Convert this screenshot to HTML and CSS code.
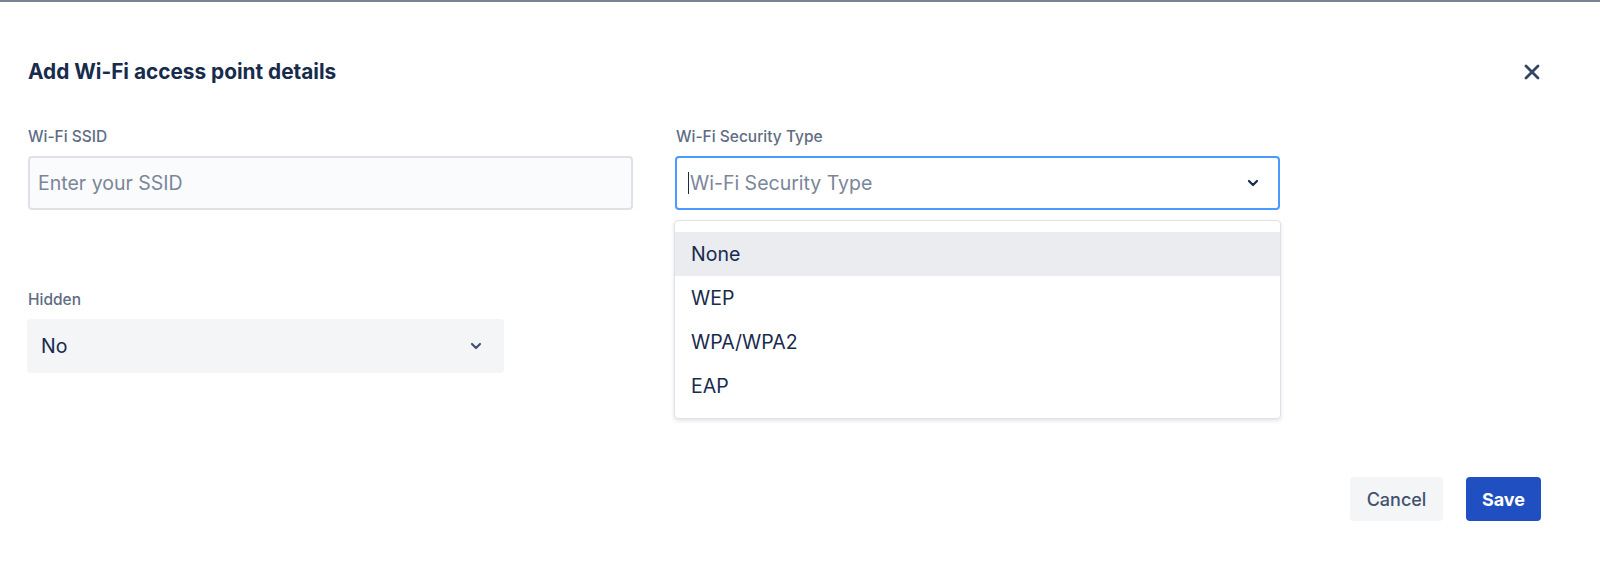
FILE: index.html
```html
<!DOCTYPE html>
<html>
  <head>
    <title>Add Wi-Fi access point</title>
    <meta charset="utf-8">
    <link rel="stylesheet" href="styles.css">
  </head>
  <body>
  <div class="topline"></div>
  <div class="modal">
    <div class="modal-header">
      <h1 class="modal-title">Add Wi-Fi access point details</h1>
      <span class="close-btn">
        <svg width="16" height="16" viewBox="0 0 16 16"><path d="M2 2 L14 14 M14 2 L2 14" stroke="#344563" stroke-width="2.8" stroke-linecap="round"/></svg>
      </span>
    </div>

    <div class="form-grid">
      <div class="field">
        <label class="field-label">Wi-Fi SSID</label>
        <div class="text-input"><span class="placeholder">Enter your SSID</span></div>
      </div>
      <div class="field field-security">
        <label class="field-label">Wi-Fi Security Type</label>
        <div class="select select-focused">
          <span class="placeholder"><span class="caret"></span>Wi-Fi Security Type</span>
          <svg class="chevron" width="12" height="8" viewBox="0 0 12 8"><path d="M2 2 L6 6 L10 2" fill="none" stroke="#172b4d" stroke-width="2.2" stroke-linecap="round" stroke-linejoin="round"/></svg>
        </div>
        <!-- open menu of the security select -->
        <div class="menu">
          <div class="menu-item active">None</div>
          <div class="menu-item">WEP</div>
          <div class="menu-item">WPA/WPA2</div>
          <div class="menu-item">EAP</div>
        </div>
      </div>
    </div>

    <div class="field field-hidden">
      <label class="field-label">Hidden</label>
      <div class="select select-grey">
        <span class="value">No</span>
        <svg class="chevron" width="12" height="8" viewBox="0 0 12 8"><path d="M2 2 L6 6 L10 2" fill="none" stroke="#42526e" stroke-width="2.2" stroke-linecap="round" stroke-linejoin="round"/></svg>
      </div>
    </div>

    <div class="modal-footer">
      <button class="btn btn-cancel">Cancel</button>
      <button class="btn btn-save">Save</button>
    </div>
  </div>
  </body>
</html>
```

FILE: styles.css
```css
body{
  margin: 0;
  background: #fff;
  font-family: Inter, "Noto Sans", sans-serif;
  color: #172b4d;
}

.topline{
  height: 2px;
  background: #7a8294;
}

.modal{
  padding: 0 59px 0 28px;
}

.modal-header{
  display: flex;
  justify-content: space-between;
  align-items: center;
  margin-top: 58px;
  height: 24px;
}

.modal-title{
  margin: 0;
  font-size: 20.8px;
  line-height: 24px;
  font-weight: 700;
  color: #172b4d;
}

.close-btn{
  display: flex;
  width: 16px;
  height: 16px;
  margin-right: 1px;
}

.form-grid{
  display: grid;
  grid-template-columns: 605px 605px;
  column-gap: 42px;
  margin-top: 43px;
}

.field{
  display: flex;
  flex-direction: column;
}

.field-security{
  position: relative;
  margin-left: 1px;
}

.field-label{
  font-size: 15.5px;
  line-height: 20px;
  font-weight: 500;
  color: #5e6c84;
  margin-bottom: 9px;
}

.text-input{
  box-sizing: border-box;
  height: 54px;
  border: 2px solid #dfe1e6;
  border-radius: 4px;
  background: #fafbfc;
  display: flex;
  align-items: center;
  padding-left: 8px;
}

.placeholder{
  font-size: 19.5px;
  color: #7a869a;
  display: flex;
  align-items: center;
}

.select{
  box-sizing: border-box;
  height: 54px;
  border-radius: 4px;
  display: flex;
  align-items: center;
  justify-content: space-between;
}

.select-focused{
  border: 2px solid #4c9aff;
  background: #fff;
  padding: 0 19px 0 11px;
  margin-left: -1px;
}

.caret{
  display: inline-block;
  width: 1px;
  height: 22px;
  background: #172b4d;
  margin-right: 1px;
}

.select-grey{
  width: 477px;
  background: #f4f5f7;
  padding: 0 22px 0 14px;
  margin-left: -1px;
}

.value{
  font-size: 19.5px;
  color: #172b4d;
}

.menu{
  position: absolute;
  top: 93px;
  left: -2px;
  width: 607px;
  box-sizing: border-box;
  background: #fff;
  border: 1px solid #dfe1e6;
  border-radius: 4px;
  box-shadow: 0 2px 4px rgba(9, 30, 66, 0.12);
  padding: 11px 0 10px;
}

.menu-item{
  height: 44px;
  line-height: 44px;
  padding-left: 16px;
  font-size: 19.5px;
  color: #172b4d;
}

.menu-item.active{
  background: #ebecf0;
}

.field-hidden{
  margin-top: 80px;
}

.modal-footer{
  display: flex;
  justify-content: flex-end;
  gap: 23px;
  margin-top: 104px;
}

.btn{
  height: 44px;
  border: 0;
  border-radius: 4px;
  font-family: Inter, "Noto Sans", sans-serif;
  font-size: 18px;
  padding: 0;
}

.btn-cancel{
  width: 93px;
  background: #f4f5f7;
  color: #42526e;
  font-weight: 500;
}

.btn-save{
  width: 75px;
  background: #1f4fc1;
  color: #fff;
  font-weight: 700;
}
```
